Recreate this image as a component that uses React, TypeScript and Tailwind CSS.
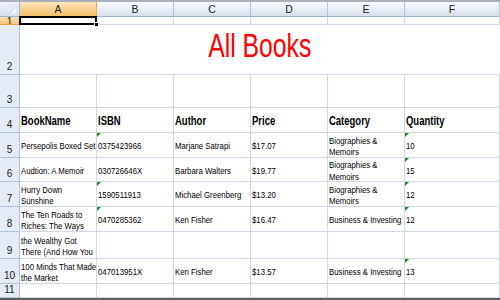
const sans = "font-['Liberation_Sans',Arial,sans-serif]";

type Cell = { lines?: string[]; tri?: boolean };

const rows: { n: number; cells: Cell[] }[] = [
  {
    n: 5,
    cells: [
      { lines: ["Persepolis Boxed Set"] },
      { lines: ["0375423966"], tri: true },
      { lines: ["Marjane Satrapi"] },
      { lines: ["$17.07"] },
      { lines: ["Biographies &", "Memoirs"] },
      { lines: ["10"], tri: true },
    ],
  },
  {
    n: 6,
    cells: [
      { lines: ["Audtion: A Memoir"] },
      { lines: ["030726646X"] },
      { lines: ["Barbara Walters"] },
      { lines: ["$19.77"] },
      { lines: ["Biographies &", "Memoirs"] },
      { lines: ["15"], tri: true },
    ],
  },
  {
    n: 7,
    cells: [
      { lines: ["Hurry Down", "Sunshine"] },
      { lines: ["1590511913"], tri: true },
      { lines: ["Michael Greenberg"] },
      { lines: ["$13.20"] },
      { lines: ["Biographies &", "Memoirs"] },
      { lines: ["12"], tri: true },
    ],
  },
  {
    n: 8,
    cells: [
      { lines: ["The Ten Roads to", "Riches: The Ways"] },
      { lines: ["0470285362"], tri: true },
      { lines: ["Ken Fisher"] },
      { lines: ["$16.47"] },
      { lines: ["Business & Investing"] },
      { lines: ["12"], tri: true },
    ],
  },
  {
    n: 9,
    cells: [{ lines: ["the Wealthy Got", "There (And How You"] }, {}, {}, {}, {}, {}],
  },
  {
    n: 10,
    cells: [
      { lines: ["100 Minds That Made", "the Market"] },
      { lines: ["047013951X"] },
      { lines: ["Ken Fisher"] },
      { lines: ["$13.57"] },
      { lines: ["Business & Investing"] },
      { lines: ["13"], tri: true },
    ],
  },
];

function RowHead({ n }: { n: number }) {
  return (
    <div
      className={`flex items-end justify-center overflow-hidden border-r border-b border-[#b1c3d8] bg-[#e4ebf5] pb-[2px] text-[10px] leading-none text-[#222] ${sans}`}
    >
      {n}
    </div>
  );
}

function DataCell({ cell, bold }: { cell: Cell; bold?: boolean }) {
  return (
    <div
      className={`relative flex flex-col justify-center overflow-hidden whitespace-nowrap border-r border-b border-[#d0d7e5] pt-[2px] pl-[1px] text-black ${sans} ${
        bold ? "text-[12px] font-bold leading-[12px]" : "text-[9.5px] leading-[11.5px]"
      }`}
    >
      {cell.tri && (
        <svg className="absolute left-0 top-0" width="4" height="4" viewBox="0 0 4 4">
          <polygon points="0,0 4,0 0,4" fill="#1a8a1a" />
        </svg>
      )}
      {cell.lines?.map((l, i) => (
        <span key={i} className={`block origin-left ${bold ? "scale-x-[0.79]" : "scale-x-[0.82]"}`}>
          {l}
        </span>
      ))}
    </div>
  );
}

export default function App() {
  const cols = ["A", "B", "C", "D", "E", "F"];
  const heads = ["BookName", "ISBN", "Author", "Price", "Category", "Quantity"];
  return (
    <div className="h-[300px] w-[500px] overflow-hidden border-t-2 border-b-2 border-t-[#a9b0ba] border-b-[#5e5e5e] bg-white">
      <div className="grid grid-cols-[20px_77px_77px_77px_77px_77px_1fr] grid-rows-[15px_8px_50px_33px_25px_25px_24px_25px_25px_27px_25px_14px]">
        {/* corner */}
        <div className="relative border-r border-b border-[#9eb6ce] bg-gradient-to-b from-[#eef2f8] to-[#d6dfeb]">
          <svg className="absolute right-[2px] bottom-[2px]" width="8" height="8" viewBox="0 0 8 8">
            <polygon points="8,0 8,8 0,8" fill="#f4f6f9" stroke="#b8c4d4" strokeWidth="0.5" />
          </svg>
        </div>
        {cols.map((c) => (
          <div
            key={c}
            className={`flex items-center justify-center border-r border-b text-[10.5px] leading-none text-[#222] ${sans} ${
              c === "A"
                ? "bg-gradient-to-b from-[#fde6bd] via-[#f8d291] to-[#f3c06b] border-r-[#e6b060] border-b-[#e8962f]"
                : "bg-gradient-to-b from-[#f7f9fc] via-[#e8edf4] to-[#d7dfea] border-r-[#b8c6d7] border-b-[#9eb6ce]"
            }`}
          >
            {c}
          </div>
        ))}

        {/* row 1 */}
        <div className="flex items-start justify-center overflow-hidden border-r border-b border-[#e6a34a] bg-gradient-to-b from-[#fbe2b4] to-[#f4c67a] text-[10px] leading-[10px] text-[#222]">
          <span className={sans}>1</span>
        </div>
        <div className="relative border-r border-b border-[#d0d7e5]">
          <div className="absolute -left-[1px] -top-[1px] -right-[1px] -bottom-[1px] border-2 border-black" />
          <div className="absolute -right-[3px] -bottom-[3px] h-[5px] w-[5px] border border-white bg-black" />
        </div>
        {cols.slice(1).map((c) => (
          <div key={c} className="border-r border-b border-[#d0d7e5]" />
        ))}

        {/* row 2 title */}
        <RowHead n={2} />
        <div className="col-span-6 flex items-center justify-center border-b border-[#d0d7e5] pb-[9px]">
          <span className={`inline-block scale-x-[0.75] text-[33px] leading-none text-[#ff0000] ${sans}`}>
            All Books
          </span>
        </div>

        {/* row 3 */}
        <RowHead n={3} />
        {cols.map((c) => (
          <div key={c} className="border-r border-b border-[#d0d7e5]" />
        ))}

        {/* row 4 headings */}
        <RowHead n={4} />
        {heads.map((h) => (
          <DataCell key={h} cell={{ lines: [h] }} bold />
        ))}

        {rows.map((r) => (
          <div key={r.n} className="contents">
            <RowHead n={r.n} />
            {r.cells.map((cell, i) => (
              <DataCell key={i} cell={cell} />
            ))}
          </div>
        ))}

        {/* row 11 */}
        <RowHead n={11} />
        {cols.map((c) => (
          <div key={c} className="border-r border-b border-[#d0d7e5]" />
        ))}
      </div>
    </div>
  );
}
